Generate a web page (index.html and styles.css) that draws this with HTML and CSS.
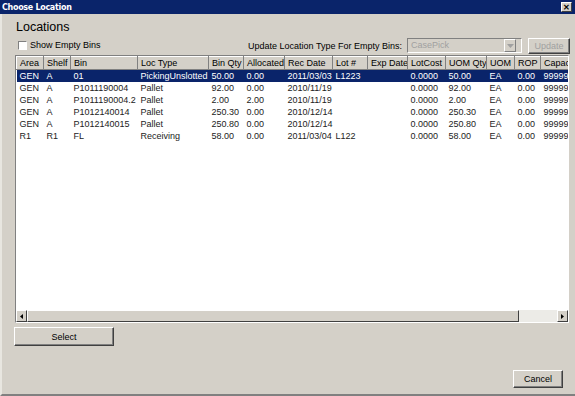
FILE: index.html
```html
<!DOCTYPE html>
<html lang="en">
<head>
    <meta charset="UTF-8">
    <title>Choose Location</title>
    <link rel="stylesheet" href="styles.css">
</head>
<body>
<div class="dialog">
    <div class="titlebar">
        <span class="title">Choose Location</span>
        <span class="close">&#x2715;</span>
    </div>

    <div class="content">
        <h1>Locations</h1>

        <div class="toolbar">
            <label class="check"><span class="box"></span>Show Empty Bins</label>
            <div class="update">
                <span>Update Location Type For Empty Bins:</span>
                <div class="combo">
                    <span class="combo-text">CasePick</span>
                    <span class="combo-btn"><svg width="7" height="4" viewBox="0 0 7 4"><path d="M0 0h7L3.5 4z" fill="#a0a0a0"/></svg></span>
                </div>
                <button class="btn btn-disabled">Update</button>
            </div>
        </div>

        <div class="grid">
            <div class="grid-view">
                <table>
                    <colgroup>
                        <col style="width:27px"><col style="width:27px"><col style="width:67px"><col style="width:71px">
                        <col style="width:35px"><col style="width:41px"><col style="width:48px"><col style="width:35px">
                        <col style="width:40px"><col style="width:38px"><col style="width:41px"><col style="width:28px">
                        <col style="width:26px"><col style="width:40px">
                    </colgroup>
                    <thead>
                        <tr>
                            <th>Area</th><th>Shelf</th><th>Bin</th><th>Loc Type</th><th>Bin Qty</th><th>Allocated</th>
                            <th>Rec Date</th><th>Lot #</th><th>Exp Date</th><th>LotCost</th><th>UOM Qty</th><th>UOM</th>
                            <th>ROP</th><th>Capacity</th>
                        </tr>
                    </thead>
                    <tbody>
                        <tr class="selected">
                            <td>GEN</td><td>A</td><td>01</td><td>PickingUnslotted</td><td>50.00</td><td>0.00</td>
                            <td>2011/03/03</td><td>L1223</td><td></td><td>0.0000</td><td>50.00</td><td>EA</td><td>0.00</td><td>99999999</td>
                        </tr>
                        <tr>
                            <td>GEN</td><td>A</td><td>P1011190004</td><td>Pallet</td><td>92.00</td><td>0.00</td>
                            <td>2010/11/19</td><td></td><td></td><td>0.0000</td><td>92.00</td><td>EA</td><td>0.00</td><td>99999999</td>
                        </tr>
                        <tr>
                            <td>GEN</td><td>A</td><td>P1011190004.2</td><td>Pallet</td><td>2.00</td><td>2.00</td>
                            <td>2010/11/19</td><td></td><td></td><td>0.0000</td><td>2.00</td><td>EA</td><td>0.00</td><td>99999999</td>
                        </tr>
                        <tr>
                            <td>GEN</td><td>A</td><td>P1012140014</td><td>Pallet</td><td>250.30</td><td>0.00</td>
                            <td>2010/12/14</td><td></td><td></td><td>0.0000</td><td>250.30</td><td>EA</td><td>0.00</td><td>99999999</td>
                        </tr>
                        <tr>
                            <td>GEN</td><td>A</td><td>P1012140015</td><td>Pallet</td><td>250.80</td><td>0.00</td>
                            <td>2010/12/14</td><td></td><td></td><td>0.0000</td><td>250.80</td><td>EA</td><td>0.00</td><td>99999999</td>
                        </tr>
                        <tr>
                            <td>R1</td><td>R1</td><td>FL</td><td>Receiving</td><td>58.00</td><td>0.00</td>
                            <td>2011/03/04</td><td>L122</td><td></td><td>0.0000</td><td>58.00</td><td>EA</td><td>0.00</td><td>99999999</td>
                        </tr>
                    </tbody>
                </table>
            </div>
            <div class="hscroll">
                <span class="arrow"><svg width="3" height="5" viewBox="0 0 3 5"><path d="M3 0v5L0 2.5z" fill="#000"/></svg></span>
                <span class="thumb"></span>
                <span class="track"></span>
                <span class="arrow"><svg width="3" height="5" viewBox="0 0 3 5"><path d="M0 0v5L3 2.5z" fill="#000"/></svg></span>
            </div>
        </div>

        <button class="btn btn-select">Select</button>

        <div class="footer">
            <button class="btn btn-cancel">Cancel</button>
        </div>
    </div>
</div>
</body>
</html>
```

FILE: styles.css
```css
* {
    box-sizing: border-box;
}
body {
    margin: 0;
    background-color: #d4d0c8;
    font-family: "Liberation Sans", Arial, sans-serif;
    font-size: 9px;
    color: #000;
}
.dialog {
    width: 575px;
    height: 396px;
    display: flex;
    flex-direction: column;
    border-left: 2px solid #e8e6e0;
    border-bottom: 2px solid #808080;
    background-color: #d4d0c8;
}
.titlebar {
    height: 14px;
    margin-left: -2px;
    background-color: #0a246a;
    color: #fff;
    display: flex;
    align-items: center;
    justify-content: space-between;
    padding: 0 3px 0 2px;
}
.title {
    font-family: "DejaVu Sans", sans-serif;
    font-weight: bold;
    font-size: 8px;
    letter-spacing: -0.3px;
}
.close {
    width: 11px;
    height: 10px;
    background-color: #d4d0c8;
    color: #000;
    font-size: 8px;
    font-weight: bold;
    line-height: 9px;
    text-align: center;
    border: 1px solid;
    border-color: #fff #404040 #404040 #fff;
}
.content {
    flex: 1;
    display: flex;
    flex-direction: column;
    padding: 0 4px 0 13px;
}
h1 {
    margin: 4px 0 0 1px;
    font-size: 12.5px;
    font-weight: normal;
    line-height: 18px;
}
.toolbar {
    display: flex;
    justify-content: space-between;
    align-items: center;
    height: 17px;
    margin-top: 1px;
}
.check {
    display: flex;
    align-items: center;
    gap: 3px;
    margin-left: 3px;
    margin-top: -1px;
}
.box {
    width: 9px;
    height: 9px;
    background-color: #fff;
    border: 1px solid;
    border-color: #808080 #fff #fff #808080;
}
.update {
    display: flex;
    align-items: center;
    margin-right: 1px;
}
.update span {
    margin-right: 5px;
}
.combo {
    width: 115px;
    height: 15px;
    display: flex;
    background-color: #d4d0c8;
    border: 1px solid;
    border-color: #808080 #fff #fff #808080;
    margin-right: 6px;
}
.combo-text {
    flex: 1;
    color: #a0a0a0;
    padding-left: 3px;
    line-height: 13px;
}
.combo-btn {
    width: 12px;
    display: flex;
    align-items: center;
    justify-content: center;
    border: 1px solid;
    border-color: #fff #808080 #808080 #fff;
}
.btn {
    font-family: "Liberation Sans", Arial, sans-serif;
    font-size: 9px;
    background-color: #d4d0c8;
    border: 1px solid;
    border-color: #fff #404040 #404040 #fff;
    box-shadow: inset -1px -1px 0 #808080;
    padding: 0;
    color: #000;
}
.btn-disabled {
    width: 42px;
    height: 16px;
    color: #a0a0a0;
}
.grid {
    height: 268px;
    margin-top: 1px;
    margin-right: 2px;
    display: flex;
    flex-direction: column;
    border: 1px solid;
    border-color: #808080 #fff #fff #808080;
    background-color: #fff;
}
.grid-view {
    flex: 1;
    overflow: hidden;
    background-color: #fff;
}
table {
    border-collapse: collapse;
    table-layout: fixed;
    width: 564px;
}
th {
    height: 13px;
    font-weight: normal;
    text-align: left;
    padding: 0 0 0 3px;
    background-color: #d4d0c8;
    border: 1px solid;
    border-color: #fff #808080 #808080 #fff;
    white-space: nowrap;
    overflow: hidden;
    line-height: 11px;
}
td {
    height: 12px;
    padding: 0 0 0 3px;
    white-space: nowrap;
    overflow: hidden;
    line-height: 12px;
    color: #222;
}
.selected td {
    background-color: #0a246a;
    color: #fff;
}
.hscroll {
    height: 12px;
    display: flex;
    background-color: #ecebe7;
}
.arrow {
    width: 11px;
    display: flex;
    align-items: center;
    justify-content: center;
    background-color: #d4d0c8;
    border: 1px solid;
    border-color: #fff #404040 #404040 #fff;
}
.thumb {
    width: 492px;
    background-color: #d4d0c8;
    border: 1px solid;
    border-color: #fff #404040 #404040 #fff;
}
.track {
    flex: 1;
}
.btn-select {
    width: 100px;
    height: 19px;
    margin-top: 4px;
    margin-left: -1px;
}
.footer {
    flex: 1;
    display: flex;
    justify-content: flex-end;
    align-items: flex-end;
    padding: 0 8px 6px 0;
}
.btn-cancel {
    width: 50px;
    height: 18px;
}
```
